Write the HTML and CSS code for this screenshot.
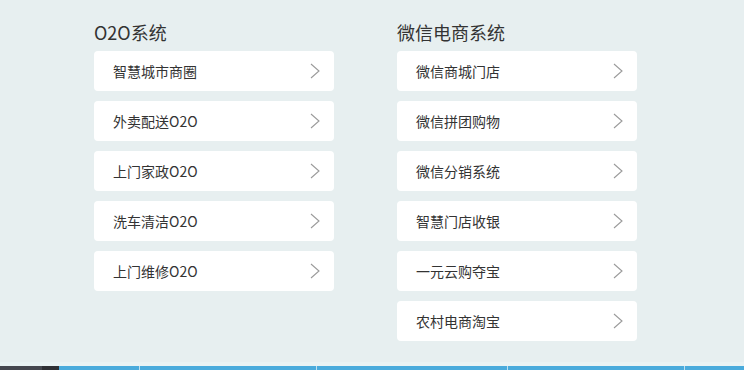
FILE: index.html
```html
<!DOCTYPE html>
<html lang="zh">
<head>
<meta charset="utf-8">
<link rel="stylesheet" href="styles.css">
</head>
<body>
<div class="page">
  <div class="columns">
    <section class="col">
      <h2 class="title">O2O系统</h2>
      <ul class="list">
        <li class="item"><span>智慧城市商圈</span><svg class="chev" viewBox="0 0 10 16"><path d="M1 1l8 7-8 7"/></svg></li>
        <li class="item"><span>外卖配送O2O</span><svg class="chev" viewBox="0 0 10 16"><path d="M1 1l8 7-8 7"/></svg></li>
        <li class="item"><span>上门家政O2O</span><svg class="chev" viewBox="0 0 10 16"><path d="M1 1l8 7-8 7"/></svg></li>
        <li class="item"><span>洗车清洁O2O</span><svg class="chev" viewBox="0 0 10 16"><path d="M1 1l8 7-8 7"/></svg></li>
        <li class="item"><span>上门维修O2O</span><svg class="chev" viewBox="0 0 10 16"><path d="M1 1l8 7-8 7"/></svg></li>
      </ul>
    </section>
    <section class="col">
      <h2 class="title">微信电商系统</h2>
      <ul class="list">
        <li class="item"><span>微信商城门店</span><svg class="chev" viewBox="0 0 10 16"><path d="M1 1l8 7-8 7"/></svg></li>
        <li class="item"><span>微信拼团购物</span><svg class="chev" viewBox="0 0 10 16"><path d="M1 1l8 7-8 7"/></svg></li>
        <li class="item"><span>微信分销系统</span><svg class="chev" viewBox="0 0 10 16"><path d="M1 1l8 7-8 7"/></svg></li>
        <li class="item"><span>智慧门店收银</span><svg class="chev" viewBox="0 0 10 16"><path d="M1 1l8 7-8 7"/></svg></li>
        <li class="item"><span>一元云购夺宝</span><svg class="chev" viewBox="0 0 10 16"><path d="M1 1l8 7-8 7"/></svg></li>
        <li class="item"><span>农村电商淘宝</span><svg class="chev" viewBox="0 0 10 16"><path d="M1 1l8 7-8 7"/></svg></li>
      </ul>
    </section>
  </div>
  <div class="footer-bar">
    <div class="seg seg-dark"></div>
    <div class="seg seg-darker"></div>
    <div class="seg seg-blue w1"></div>
    <div class="seg seg-blue w2"></div>
    <div class="seg seg-blue w3"></div>
    <div class="seg seg-blue w4"></div>
    <div class="seg seg-blue w5"></div>
  </div>
</div>
</body>
</html>
```

FILE: styles.css
```css
* { box-sizing: border-box; }
html, body { margin: 0; padding: 0; }
body {
  background: #e7eff0;
  font-family: "Noto Sans CJK SC", "Noto Sans", sans-serif;
  color: #333;
  width: 744px;
  height: 370px;
  overflow: hidden;
}
.page {
  height: 370px;
  display: flex;
  flex-direction: column;
}
.columns {
  flex: 1;
  display: flex;
  gap: 63px;
  padding-left: 94px;
  padding-top: 20px;
}
.col { width: 240px; }
.title {
  margin: 0 0 7px 0;
  font-size: 18px;
  font-weight: 400;
  line-height: 24px;
  color: #333;
}
.list {
  list-style: none;
  margin: 0;
  padding: 0;
  display: flex;
  flex-direction: column;
  gap: 10px;
}
.item {
  height: 40px;
  background: #fff;
  border-radius: 4px;
  display: flex;
  align-items: center;
  justify-content: space-between;
  padding: 0 14px 0 19px;
  font-size: 14px;
  font-weight: 400;
  color: #333;
}
.chev {
  width: 10px;
  height: 16px;
  fill: none;
  stroke: #9a9a9a;
  stroke-width: 1.1;
}
.footer-bar {
  height: 4px;
  display: flex;
  box-shadow: 0 -4px 0 #eaf3f4;
}
.seg { height: 4px; }
.seg-dark { width: 42px; background: #45474f; }
.seg-darker { width: 17px; background: #2f3035; }
.seg-blue { background: #4aabdc; border-right: 1px solid #bfe0f0; }
.w1 { width: 81px; }
.w2 { width: 177px; }
.w3 { width: 191px; }
.w4 { width: 177px; }
.w5 { flex: 1; border-right: 0; }
```
